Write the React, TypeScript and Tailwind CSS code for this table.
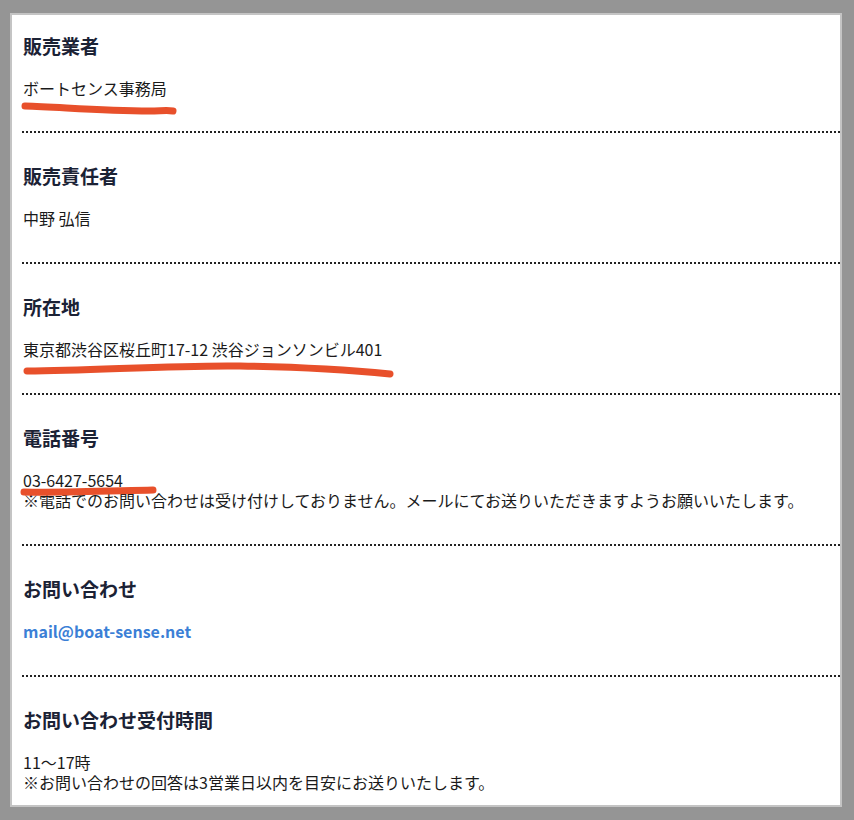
import React from "react";

const font = { fontFamily: '"Noto Sans CJK JP", "Noto Sans", sans-serif' };

function Section({
  title,
  children,
  first,
  last,
}: {
  title: string;
  children: React.ReactNode;
  first?: boolean;
  last?: boolean;
}) {
  return (
    <div
      className={`${first ? "pt-[17px] pb-[33px]" : "pt-[29px] pb-[34px]"} ${
        last ? "" : "border-b-2 border-dotted border-[#222]"
      }`}
    >
      <h2 className="text-[19px] leading-[28px] font-bold text-[#1b2235] pl-[1px]">{title}</h2>
      <div className="mt-[18px] text-[16px] leading-[20px] text-[#1a1a1a] pl-[1px]">{children}</div>
    </div>
  );
}

export default function App() {
  return (
    <div className="w-[854px] h-[820px] bg-[#959595] pt-[13px] pl-[10px]" style={font}>
      <div className="relative w-[832px] h-[794px] overflow-hidden bg-white border-2 border-[#c4c4c4] pl-[10px]">
        <Section title="販売業者" first>
          <p>ボートセンス事務局</p>
        </Section>
        <Section title="販売責任者">
          <p>中野 弘信</p>
        </Section>
        <Section title="所在地">
          <p>東京都渋谷区桜丘町17-12 渋谷ジョンソンビル401</p>
        </Section>
        <Section title="電話番号">
          <p>03-6427-5654</p>
          <p>※電話でのお問い合わせは受け付けしておりません。メールにてお送りいただきますようお願いいたします。</p>
        </Section>
        <Section title="お問い合わせ">
          <p className="font-bold text-[#3b7fd6]">mail@boat-sense.net</p>
        </Section>
        <Section title="お問い合わせ受付時間" last>
          <p>11〜17時</p>
          <p>※お問い合わせの回答は3営業日以内を目安にお送りいたします。</p>
        </Section>
        <svg
          className="absolute left-[-12px] top-[-15px] pointer-events-none"
          width="854"
          height="820"
          viewBox="0 0 854 820"
        >
          <path
            d="M25 106 C 60 107, 100 111, 150 111 C 160 111, 168 110, 173 111"
            stroke="#e8502b"
            strokeWidth="7"
            strokeLinecap="round"
            fill="none"
          />
          <path
            d="M27 371 C 100 370, 180 365, 240 366 C 300 367, 360 371, 390 374"
            stroke="#e8502b"
            strokeWidth="7"
            strokeLinecap="round"
            fill="none"
          />
          <path
            d="M24 492 C 60 493, 110 491, 153 490"
            stroke="#e8502b"
            strokeWidth="7"
            strokeLinecap="round"
            fill="none"
          />
        </svg>
      </div>
    </div>
  );
}
